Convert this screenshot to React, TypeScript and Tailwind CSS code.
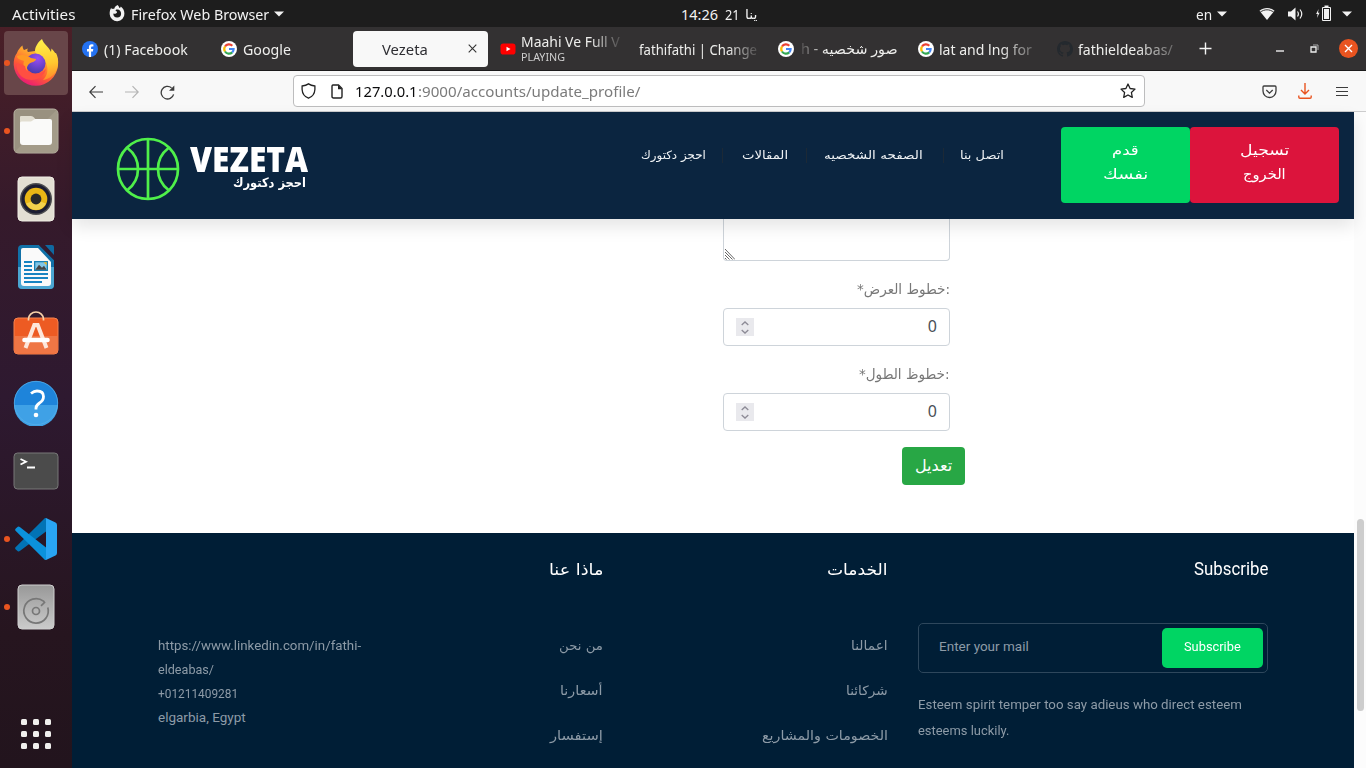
import { useLayoutEffect, useRef, useState, type ReactNode } from "react";

/* One line of text stretched or squeezed to the width of its box. */
function Fit({ className, dir = "ltr", children }: { className: string; dir?: "ltr" | "rtl"; children: ReactNode }) {
  const box = useRef<HTMLSpanElement>(null);
  const inner = useRef<HTMLSpanElement>(null);
  const [scale, setScale] = useState(1);
  useLayoutEffect(() => {
    if (box.current && inner.current) setScale(box.current.clientWidth / inner.current.offsetWidth);
  }, []);
  return (
    <span ref={box} dir="ltr" className={`block shrink-0 whitespace-nowrap text-left ${className}`}>
      <span ref={inner} dir={dir} className="inline-block origin-left" style={{ transform: `scaleX(${scale})` }}>
        {children}
      </span>
    </span>
  );
}

function Triangle({ className }: { className: string }) {
  return (
    <svg className={`shrink-0 ${className}`} width="10" height="6" viewBox="0 0 10 6">
      <path d="M0 .5h10L5 5.5z" fill="#f2f2f2" />
    </svg>
  );
}

function TopBar() {
  return (
    <div className="flex h-[27px] items-center bg-[#1d1d1d] text-[#f2f2f2]">
      <Fit className="ml-[12px] w-[63px] text-[14.5px] leading-[26px]">Activities</Fit>
      <svg className="ml-[34px] shrink-0" width="16" height="17" viewBox="0 0 16 17">
        <path d="M8.5 0c1.2 1 1.6 1.8 1.8 2.9 1-.2 1.4-.8 1.5-1.5 2.3 1.6 3.6 4.2 3.6 7A7.3 7.3 0 0 1 .7 9.2C.5 6.500 1.200 4.300 2.300 2.700l.5 1.600c.8-.5 1.400-.6 2.300-.3C5.500 2 7 .8 8.500 0z" fill="#f2f2f2" />
        <path d="M4.300 8.500c1.400.6 3 .2 3.700-1 .4-.7-.4-1.200-1-1.200-.6-.5-.4-1.200.3-1.700 2.600-.8 4.800 1.200 4.800 3.900a3.900 3.900 0 0 1-7.800 0z" fill="#1d1d1d" />
      </svg>
      <Fit className="ml-[6px] w-[138px] text-[14.5px] leading-[26px]">Firefox Web Browser</Fit>
      <Triangle className="ml-[5px]" />
      <Fit className="ml-[397px] w-[37px] text-[14.5px] leading-[26px]">14:26</Fit>
      <Fit className="ml-[7px] w-[15px] text-[14.5px] leading-[26px]">21</Fit>
      <Fit dir="rtl" className="ml-[5px] w-[13px] text-[13px] leading-[26px]">ينا</Fit>
      <Fit className="ml-[438px] w-[16px] text-[14.5px] leading-[26px]">en</Fit>
      <Triangle className="ml-[5px]" />
      <svg className="ml-[32px] shrink-0" width="16" height="14" viewBox="0 0 16 14">
        <path d="M.5 3.800C5 0 11 0 15.500 3.800L8 13z" fill="#f2f2f2" />
        <path d="M1.200 5.200C5.500 2 10.500 2 14.800 5.200" stroke="#1d1d1d" strokeWidth=".9" fill="none" />
      </svg>
      <svg className="ml-[13px] shrink-0" width="16" height="14" viewBox="0 0 16 14">
        <path d="M0 4.500h3L7.500.5v13L3 9.500H0z" fill="#f2f2f2" />
        <path d="M9.500 4.500q1.800 2.500 0 5M12 2.500q3.500 4.500 0 9" stroke="#f2f2f2" strokeWidth="1.200" fill="none" />
      </svg>
      <svg className="ml-[12px] shrink-0" width="16" height="17" viewBox="0 0 16 17">
        <path d="M2.600 4 .1 9h1.600l-.8 4L3.600 7.800H2z" fill="#f2f2f2" />
        <path d="M6.500 2.500h8v13h-8z" stroke="#f2f2f2" fill="none" />
        <path d="M8.500.5h4v2h-4zM8 4h5v10H8z" fill="#f2f2f2" />
      </svg>
      <Triangle className="ml-[10px]" />
    </div>
  );
}

function FirefoxIcon() {
  return (
    <svg className="-mt-[3px]" width="46" height="48" viewBox="0 0 46 48">
      <defs>
        <linearGradient id="ff-body" x1=".85" y1="0" x2=".25" y2="1">
          <stop offset="0" stopColor="#fff44f" />
          <stop offset=".35" stopColor="#ffa52e" />
          <stop offset=".65" stopColor="#ff5a35" />
          <stop offset="1" stopColor="#e6137d" />
        </linearGradient>
        <linearGradient id="ff-tail" x1=".5" y1="0" x2=".6" y2="1">
          <stop offset="0" stopColor="#fff04a" />
          <stop offset=".6" stopColor="#ffc82f" />
          <stop offset="1" stopColor="#ff8a2a" />
        </linearGradient>
        <radialGradient id="ff-globe" cx=".6" cy=".25" r=".8">
          <stop offset="0" stopColor="#9a4df5" />
          <stop offset="1" stopColor="#433aa8" />
        </radialGradient>
      </defs>
      <path d="M4 15C5 12 7 9.500 9.500 7.500c.1 2 .5 3 1.500 4.500l4-1.500C14 12 14 13 15 14l7-1 14 4 7-2c2 4 2.500 8 2 12a22.200 22.200 0 0 1-44.300 0C.5 22.500 1.500 18 4 15z" fill="url(#ff-body)" />
      <path d="M29 1c1.500 5 7 8 9 13l.5-3.500C43 15 45.500 20 45 27 43.500 36 37 41 30 42c5-5 6-12 2-19-2-4-9-5-10-10 0-4 3-9 7-12z" fill="url(#ff-tail)" />
      <circle cx="22.500" cy="25.500" r="10" fill="url(#ff-globe)" />
      <path d="M4 18c5-2 10-1 14 2l5 1c0 3-5 3-7 5-3 3-2 6-1 8-5-3-5-9-4-11-3-1-7-2-7-5z" fill="#ff9a25" />
      <path d="M12 28c1 9 13 11 21 3-2 9-13 14-22 9-6-3-8-10-7-15 2 1 6 2 8 3z" fill="#ff4f42" />
    </svg>
  );
}

function FilesIcon() {
  return (
    <svg width="46" height="46" viewBox="0 0 46 46">
      <rect x="1" y="1" width="44" height="44" rx="4.500" fill="#999180" stroke="#b9b3a4" />
      <path d="M1.500 44 44 1.500V41q0 3.500-3.500 3.500H5q-3 0-3.500-.5z" fill="#a39b89" />
      <path d="M7 9q0-1 1-1h10q2 0 3 1.500L23 12v10H7z" fill="#e2ded1" />
      <path d="M7 15q0-1.500 1.500-1.500H18l4-2.500h15q2 0 2 2v21q0 3-3 3H10q-3 0-3-3z" fill="#fafaf9" />
    </svg>
  );
}

function MusicIcon() {
  return (
    <svg width="38" height="46" viewBox="0 0 38 46">
      <rect x="1" y="1" width="36" height="44" rx="4" fill="#e3dfd3" stroke="#f0ede5" />
      <circle cx="19" cy="23" r="16" fill="#4c4c4e" />
      <circle cx="19" cy="23" r="14.500" fill="#1c1d31" />
      <circle cx="19" cy="23" r="11.300" fill="#e9b615" />
      <path d="M9 27.500q10-5 20 0-3 6.500-10 6.500T9 27.500z" fill="#f3d14c" />
      <circle cx="19" cy="23" r="5.400" fill="#292929" />
    </svg>
  );
}

function WriterIcon() {
  return (
    <svg width="38" height="46" viewBox="0 0 38 46">
      <path d="M5 1h17l15 15v25q0 4-4 4H5q-4 0-4-4V5q0-4 4-4z" fill="#1171a8" />
      <path d="M1 23h36v18q0 4-4 4H5q-4 0-4-4z" fill="#4ba6d2" />
      <path d="M6 4h15l13 14v21q0 3-3 3H7q-3 0-3-3V6q0-2 2-2z" fill="#fafafa" />
      <path d="M28 1h7q2 0 2 2v8z" fill="#0f69a1" />
      <path d="M22 1h4l11 11v4z" fill="#321c31" />
      <path d="M7 18h8M7 22h8M7 26h8M7 30h24M7 34h24M7 38h18" stroke="#1784c2" strokeWidth="2" />
      <rect x="17" y="17" width="14" height="10" fill="#1781b5" />
      <rect x="18.300" y="18.300" width="11.400" height="7.400" fill="#82c7e8" />
      <path d="m18.300 25.700 3.700-5 3 3 2-2 2.700 4z" fill="#454545" />
      <path d="M26.500 18.300h3.200v3z" fill="#f2b51b" />
    </svg>
  );
}

function SoftwareIcon() {
  return (
    <svg className="-mt-[5px]" width="46" height="46" viewBox="0 0 46 46">
      <rect x="1" y="8" width="44" height="36" rx="4" fill="#ed5b23" stroke="#f5824f" />
      <path d="M1.500 26h43v14q0 3.500-3.500 3.500H5q-3.500 0-3.500-3.500z" fill="#ef7645" />
      <path d="M15.500 10.500V9a7.500 7 0 0 1 15 0v1.500" fill="none" stroke="#f9d2a9" strokeWidth="1.700" />
      <path d="m12.500 38 8.800-23h3.400L33.500 38" fill="none" stroke="#fde7db" strokeWidth="4" />
      <path d="M11.500 30h23" stroke="#fff" strokeWidth="4.600" strokeLinecap="round" />
    </svg>
  );
}

function HelpIcon() {
  return (
    <svg width="46" height="46" viewBox="0 0 46 46">
      <circle cx="23" cy="23" r="22" fill="#1e84da" />
      <path d="M1 25h44a22 22 0 0 1-44 0z" fill="#3fa1e6" />
      <circle cx="23" cy="23" r="21.700" fill="none" stroke="#55aee9" strokeWidth=".8" />
      <path d="M18 13.500q3-2.500 6-2.500 6.500 0 6.500 5.500 0 4-4 6.500-3.500 2.500-3.500 5v1.500" fill="none" stroke="#fff" strokeWidth="2.800" />
      <circle cx="23" cy="35" r="2.300" fill="#fff" />
    </svg>
  );
}

function TerminalIcon() {
  return (
    <svg width="46" height="38" viewBox="0 0 46 38">
      <rect x="1" y="1" width="44" height="36" rx="3.500" fill="#4b4b4b" stroke="#797979" />
      <path d="m7.500 7 5.500 2.700-5.500 2.800M14 15.500h8" fill="none" stroke="#fff" strokeWidth="1.800" />
    </svg>
  );
}

function CodeIcon() {
  return (
    <svg width="42" height="42" viewBox="0 0 42 42">
      <path d="M.3 29.500q-.5 1 .5 2l2 1.700q1 .6 2-.2L31 13.500V0h-1Z" fill="#0273b5" />
      <path d="M.3 12.500q-.5-1 .5-2l2-1.700q1-.6 2 .2L31 29.500V42h-1Z" fill="#0b92dc" />
      <path d="M31 0 40.500 4.500Q42 5.200 42 7v28q0 1.800-1.500 2.500L31 42z" fill="#29a5f3" />
    </svg>
  );
}

function DiskIcon() {
  return (
    <svg width="38" height="46" viewBox="0 0 38 46">
      <defs>
        <linearGradient id="disk" x1="0" y1="0" x2="0" y2="1">
          <stop offset="0" stopColor="#989898" />
          <stop offset="1" stopColor="#cbcbcb" />
        </linearGradient>
      </defs>
      <rect x="1" y="1" width="36" height="44" rx="4" fill="url(#disk)" stroke="#cfcfcf" />
      <path d="M30.800 23.500a12.200 12.200 0 1 1-4.300-6.300l1 1.300-3.500 3.300" fill="none" stroke="#777" strokeWidth="1.700" />
      <circle cx="19" cy="27" r="3.500" fill="none" stroke="#777" strokeWidth="1.700" />
    </svg>
  );
}

function Dock() {
  const apps = [
    { name: "firefox", icon: <FirefoxIcon />, running: true },
    { name: "files", icon: <FilesIcon />, running: true },
    { name: "music", icon: <MusicIcon /> },
    { name: "writer", icon: <WriterIcon /> },
    { name: "software", icon: <SoftwareIcon /> },
    { name: "help", icon: <HelpIcon /> },
    { name: "terminal", icon: <TerminalIcon /> },
    { name: "code", icon: <CodeIcon />, running: true },
    { name: "disk", icon: <DiskIcon />, running: true },
  ];
  return (
    <aside className="flex w-[72px] shrink-0 flex-col bg-[linear-gradient(#4a1f27_0%,#351a2b_25%,#2e1930_50%,#26151f_82%,#22141d_100%)] pt-[2px]">
      {apps.map((app, i) => (
        <div key={app.name} className="flex h-[68px] items-center">
          <i className={`ml-[4px] h-[6px] w-[6px] shrink-0 rounded-full ${app.running ? "relative z-10 bg-[#e95420]" : ""}`} />
          <div className={`-ml-[6px] flex h-[64px] w-[64px] items-center justify-center rounded-[4px] ${i === 0 ? "bg-[#684649]" : ""}`}>
            {app.icon}
          </div>
        </div>
      ))}
      <div className="ml-[21px] mt-[78px] grid w-[30px] grid-cols-3 gap-[6px]">
        {[0, 1, 2, 3, 4, 5, 6, 7, 8].map((n) => (
          <i key={n} className="h-[6px] w-[6px] rounded-[1.500px] bg-[#f0efed]" />
        ))}
      </div>
    </aside>
  );
}

function GoogleIcon() {
  return (
    <svg className="shrink-0" width="16" height="16" viewBox="0 0 16 16">
      <circle cx="8" cy="8" r="8" fill="#fff" />
      <g fill="none" strokeWidth="2.200">
        <path d="M4 5.500A4.700 4.700 0 0 1 11.300 4.700" stroke="#ea4335" />
        <path d="M4 5.500a4.700 4.700 0 0 0 0 5" stroke="#fbbc05" />
        <path d="M4 10.500a4.700 4.700 0 0 0 7.200.9" stroke="#34a853" />
        <path d="M11.200 11.400A4.700 4.700 0 0 0 12.600 8H8" stroke="#4285f4" />
      </g>
    </svg>
  );
}

function TabBar() {
  return (
    <div className="flex h-[44px] items-center border-b border-[#1c1b1c] bg-[#333132] text-[14.5px] leading-[24px] text-[#eeeeec]">
      <div className="flex w-[139px] items-center pl-[10px]">
        <svg width="16" height="16" viewBox="0 0 16 16">
          <circle cx="8" cy="8" r="8" fill="#2472f2" />
          <path d="M6.900 16v-5.600H5V8.100h1.900V6.500c0-2 1.100-3.200 3-3.200l1.500.1v2h-1c-1 0-1.300.5-1.300 1.200v1.500h2.200l-.4 2.300H9.100V16z" fill="#fff" />
        </svg>
        <Fit className="ml-[6px] w-[84px]">(1) Facebook</Fit>
      </div>
      <div className="flex w-[139px] items-center pl-[10px]">
        <GoogleIcon />
        <Fit className="ml-[6px] w-[48px]">Google</Fit>
      </div>
      <div className="mx-[3px] flex h-[36px] w-[135px] items-center rounded-[4px] bg-[#f8f8f8] pl-[29px] text-[#2e2e33]">
        <Fit className="w-[46px]">Vezeta</Fit>
        <svg className="ml-[40px]" width="9" height="9" viewBox="0 0 9 9">
          <path d="m.7.7 7.600 7.600m0-7.600L.7 8.300" stroke="#333" strokeWidth="1.100" />
        </svg>
      </div>
      <div className="flex w-[137px] items-center pl-[9px]">
        <svg className="shrink-0" width="16" height="12" viewBox="0 0 16 12">
          <rect x=".5" y=".5" width="15" height="11" rx="2.800" fill="#f00" />
          <path d="m6.500 3.700 4 2.300-4 2.300z" fill="#fff" />
        </svg>
        <div className="ml-[5px]">
          <Fit className="w-[99px] leading-[17px] [mask-image:linear-gradient(to_right,#000_70%,#0003_97%)]">Maahi Ve Full V</Fit>
          <Fit className="w-[44px] text-[10.500px] leading-[15px] text-[#cfcfcf]">PLAYING</Fit>
        </div>
      </div>
      <div className="flex w-[140px] items-center pl-[11px]">
        <Fit className="w-[118px] [mask-image:linear-gradient(to_right,#000_75%,#0003_98%)]">fathifathi | Change</Fit>
      </div>
      <div className="flex w-[140px] items-center pl-[10px]">
        <GoogleIcon />
        <Fit dir="rtl" className="ml-[7px] w-[97px] text-[14px] [mask-image:linear-gradient(to_left,#000_75%,#0003_98%)]">
          صور شخصيه - h
        </Fit>
      </div>
      <div className="flex w-[139px] items-center pl-[10px]">
        <GoogleIcon />
        <Fit className="ml-[5px] w-[93px] [mask-image:linear-gradient(to_right,#000_65%,#0005_98%)]">lat and lng for</Fit>
      </div>
      <div className="flex w-[139px] items-center pl-[10px]">
        <svg className="shrink-0" width="16" height="16" viewBox="0 0 16 16" fill="#24292e">
          <path d="M8 0C3.580 0 0 3.580 0 8c0 3.540 2.290 6.530 5.470 7.590.4.070.55-.17.55-.38 0-.19-.01-.82-.01-1.490-2.010.37-2.530-.49-2.690-.94-.09-.23-.48-.94-.82-1.130-.28-.15-.68-.52-.01-.53.63-.01 1.080.58 1.230.82.72 1.210 1.870.87 2.330.66.070-.52.28-.87.51-1.070-1.780-.2-3.640-.89-3.640-3.950 0-.87.31-1.590.82-2.150-.08-.2-.36-1.020.08-2.120 0 0 .67-.21 2.200.82.64-.18 1.320-.27 2-.27s1.360.09 2 .27c1.530-1.040 2.200-.82 2.200-.82.44 1.100.16 1.920.08 2.120.51.56.82 1.270.82 2.150 0 3.070-1.870 3.750-3.650 3.950.29.25.54.73.54 1.480 0 1.070-.01 1.930-.01 2.200 0 .21.15.46.55.38A8.010 8.010 0 0 0 16 8c0-4.420-3.580-8-8-8z" />
        </svg>
        <Fit className="ml-[5px] w-[95px] [mask-image:linear-gradient(to_right,#000_60%,#0005_98%)]">fathieldeabas/</Fit>
      </div>
      <svg className="ml-[13px]" width="13" height="13" viewBox="0 0 13 13">
        <path d="M6.500.5v12M.5 6.500h12" stroke="#f4f4f4" strokeWidth="1.400" />
      </svg>
      <svg className="ml-[64px] mt-[5px]" width="8" height="2" viewBox="0 0 8 2">
        <path d="M0 1h8" stroke="#eee" strokeWidth="1.400" />
      </svg>
      <svg className="ml-[26px]" width="9" height="9" viewBox="0 0 9 9">
        <path d="M1 3h5v5H1z" fill="none" stroke="#eee" strokeWidth="1.300" />
        <path d="M3 1h5v5" fill="none" stroke="#aaa" />
      </svg>
      <div className="ml-[20px] flex h-[19px] w-[19px] items-center justify-center rounded-full bg-[#e95420]">
        <svg width="9" height="9" viewBox="0 0 9 9">
          <path d="m1 1 7 7m0-7L1 8" stroke="#fff" strokeWidth="1.400" />
        </svg>
      </div>
    </div>
  );
}

function NavBar() {
  return (
    <div className="flex h-[41px] items-center border-b border-[#cccccd] bg-[#f8f8f8]">
      <svg className="ml-[17px] mt-[2px]" width="14" height="14" viewBox="0 0 14 14" fill="none" stroke="#3c3c3c" strokeWidth="1.200">
        <path d="M14 7H1M6.500 1.200.8 7l5.700 5.800" />
      </svg>
      <svg className="ml-[22px] mt-[2px]" width="14" height="14" viewBox="0 0 14 14" fill="none" stroke="#b4b4b4" strokeWidth="1.200">
        <path d="M0 7h13M7.500 1.200 13.200 7l-5.700 5.800" />
      </svg>
      <svg className="ml-[21px] mt-[2px]" width="15" height="15" viewBox="0 0 15 15">
        <path d="M13.600 9.300A6.300 6.300 0 1 1 11.500 2.800" fill="none" stroke="#3c3c3c" strokeWidth="1.300" />
        <path d="M14.300.5v5.200H9z" fill="#3c3c3c" />
      </svg>
      <div className="ml-[118px] flex h-[32px] w-[852px] items-center rounded-[4px] border border-[#bdbdbe] bg-white text-[15px] leading-[28px]">
        <svg className="ml-[7px]" width="15" height="16" viewBox="0 0 15 16" fill="none" stroke="#222" strokeWidth="1.300">
          <path d="M7.500.9Q10 2.700 13.900 3v3.500Q13.500 13 7.500 15.200 1.500 13 1.100 6.500V3Q5 2.700 7.500.9z" />
        </svg>
        <svg className="ml-[15px]" width="12" height="15" viewBox="0 0 12 15">
          <path d="M2 1h5.500L11 4.500v8q0 1.500-1.500 1.500h-7Q1 14 1 12.500v-10Q1 1 2 1z" fill="none" stroke="#222" strokeWidth="1.400" />
          <path d="M7 1v4.300h4z" fill="#222" />
        </svg>
        <Fit className="ml-[12px] w-[63px] text-[#0c0c0d]">127.0.0.1</Fit>
        <Fit className="w-[222px] text-[#7b7b7b]">:9000/accounts/update_profile/</Fit>
        <svg className="ml-[480px]" width="16" height="16" viewBox="0 0 16 16">
          <path d="m8 1 2.100 4.500 4.900.6-3.600 3.400.9 4.900L8 12l-4.300 2.400.9-4.900L1 6.100l4.900-.6z" fill="none" stroke="#222" strokeWidth="1.300" strokeLinejoin="round" />
        </svg>
      </div>
      <svg className="ml-[117px] mt-[2px]" width="15" height="14" viewBox="0 0 15 14" fill="none" stroke="#3c3c3c" strokeWidth="1.300">
        <path d="M2 1h11q1 0 1 1v4a6.500 6.500 0 0 1-13 0V2q0-1 1-1zM4.300 5l3.200 3.200L10.700 5" />
      </svg>
      <svg className="ml-[21px]" width="14" height="16" viewBox="0 0 14 16" fill="none" stroke="#e95420" strokeWidth="1.400">
        <path d="M7 0v10.500M3 7l4 4 4-4M.8 12.500V14q0 1.200 1.200 1.200h10q1.200 0 1.200-1.200v-1.500" />
      </svg>
      <svg className="ml-[24px]" width="12" height="11" viewBox="0 0 12 11">
        <path d="M0 1.500h12M0 5.500h12M0 9.500h12" stroke="#3c3c3c" strokeWidth="1.200" />
      </svg>
    </div>
  );
}

const arabic = "font-['DejaVu_Sans',sans-serif]";

function SiteHeader() {
  return (
    <header className="relative z-10 flex h-[107px] bg-[#0b2540] shadow-[0_8px_16px_rgba(0,0,0,0.1)]">
      <svg className="ml-[44px] mt-[25px] shrink-0" width="64" height="64" viewBox="0 0 64 64" fill="none" stroke="#4ff04a" strokeWidth="2.700">
        <circle cx="32" cy="32" r="30" />
        <path d="M32 2v60M2 32h60M11.500 11q10.500 8 10.500 21T11.500 53M52.500 11Q42 19 42 32t10.500 21" />
      </svg>
      <div className="ml-[10px] mt-[32px] w-[120px] text-white">
        <Fit className="h-[30px] w-[118px] font-['Open_Sans',sans-serif] text-[35px] leading-[30px] font-extrabold">VEZETA</Fit>
        <Fit dir="rtl" className={`ml-[43px] mt-px w-[73px] text-[13px] leading-[15px] font-bold ${arabic}`}>احجز دكتورك</Fit>
      </div>
      <nav className={`ml-[331px] mt-[33px] flex h-[20px] items-center text-[11.500px] leading-[20px] text-[#f0f3f5] ${arabic}`}>
        <Fit dir="rtl" className="w-[65px]">احجز دكتورك</Fit>
        <i className="ml-[16px] h-[15px] w-px bg-[#1c2936]" />
        <Fit dir="rtl" className="ml-[19px] w-[46px]">المقالات</Fit>
        <i className="ml-[18px] h-[15px] w-px bg-[#1c2936]" />
        <Fit dir="rtl" className="ml-[17px] w-[99px]">الصفحه الشخصيه</Fit>
        <i className="ml-[20px] h-[15px] w-px bg-[#1c2936]" />
        <Fit dir="rtl" className="ml-[16px] w-[44px]">اتصل بنا</Fit>
      </nav>
      <div className={`ml-[57px] mt-[15px] flex h-[76px] text-[14px] leading-[24px] text-white ${arabic}`}>
        <button className="flex w-[129px] flex-col items-center rounded-[4px] bg-[#00d563] pt-[11px]">
          <Fit dir="rtl" className="w-[27px]">قدم</Fit>
          <Fit dir="rtl" className="w-[45px]">نفسك</Fit>
        </button>
        <button className="flex w-[149px] flex-col items-center rounded-[4px] bg-[#dc143c] pt-[11px]">
          <Fit dir="rtl" className="w-[49px]">تسجيل</Fit>
          <Fit dir="rtl" className="w-[43px]">الخروج</Fit>
        </button>
      </div>
    </header>
  );
}

function NumberField({ label, labelWidth }: { label: string; labelWidth: string }) {
  return (
    <div className="h-[85px]">
      <div className="flex h-[31px] justify-end pt-[1px]">
        <Fit className={`text-[14px] leading-[22px] text-[#777] ${arabic} ${labelWidth}`}>{label}</Fit>
      </div>
      <div className="flex h-[38px] items-center justify-between rounded-[4px] border border-[#ced4da] px-[12px]">
        <span className="flex h-[18px] w-[18px] items-center justify-center bg-[#e9e9ed]">
          <svg width="8" height="13" viewBox="0 0 8 13" fill="none" stroke="#8d8b96" strokeWidth="1.300">
            <path d="m.7 4 3.300-3 3.300 3M.7 9 4 12l3.300-3" />
          </svg>
        </span>
        <span className="-mt-[2px] text-[16px] leading-[24px] text-[#495057]">0</span>
      </div>
    </div>
  );
}

function ProfileForm() {
  return (
    <main className="h-[314px] bg-white pl-[651px]">
      <div className="w-[227px]">
        <div className="flex h-[42px] items-end rounded-b-[4px] border border-t-0 border-[#ced4da]">
          <svg width="11" height="11" viewBox="0 0 11 11">
            <path d="M1 0l10 10.500M1 3l7.500 7.500M1 6l4.500 4.500M1 9l1.500 1.500" stroke="#666" />
          </svg>
        </div>
        <div className="pt-[16px]">
          <NumberField label="*خطوط العرض:" labelWidth="w-[93px]" />
          <NumberField label="*خطوظ الطول:" labelWidth="w-[91px]" />
        </div>
        <button className={`ml-[179px] flex h-[38px] w-[63px] items-center justify-center rounded-[4px] bg-[#28a745] text-[16px] leading-[24px] text-white ${arabic}`}>
          <Fit dir="rtl" className="w-[37px]">تعديل</Fit>
        </button>
      </div>
    </main>
  );
}

function LinkColumn({ className, title, titleWidth, links }: { className: string; title: string; titleWidth: string; links: { text: string; width: string }[] }) {
  return (
    <div className={`flex shrink-0 flex-col items-end pt-[22px] ${arabic} ${className}`}>
      <Fit dir="rtl" className={`text-[16px] leading-[30px] text-white ${titleWidth}`}>{title}</Fit>
      <div className="mt-[49px] flex flex-col items-end gap-[21px] text-[13px] leading-[24px] text-[#8d9ba7]">
        {links.map((link) => (
          <Fit key={link.text} dir="rtl" className={link.width}>{link.text}</Fit>
        ))}
      </div>
    </div>
  );
}

function SiteFooter() {
  return (
    <footer className="flex h-[235px] overflow-hidden bg-[#001e36] pl-[86px] font-['Roboto','DejaVu_Sans',sans-serif] text-[13.500px] leading-[24px] text-[#8d9ba7]">
      <address className="w-[240px] shrink-0 pt-[100px] not-italic">
        <Fit className="w-[203px]">https://www.linkedin.com/in/fathi-</Fit>
        <Fit className="w-[56px]">eldeabas/</Fit>
        <Fit className="w-[80px]">+01211409281</Fit>
        <Fit className="w-[88px]">elgarbia, Egypt</Fit>
      </address>
      <LinkColumn
        className="w-[205px]"
        title="ماذا عنا"
        titleWidth="w-[54px]"
        links={[
          { text: "من نحن", width: "w-[44px]" },
          { text: "أسعارنا", width: "w-[43px]" },
          { text: "إستفسار", width: "w-[53px]" },
        ]}
      />
      <LinkColumn
        className="w-[285px]"
        title="الخدمات"
        titleWidth="w-[61px]"
        links={[
          { text: "اعمالنا", width: "w-[37px]" },
          { text: "شركائنا", width: "w-[42px]" },
          { text: "الخصومات والمشاريع", width: "w-[126px]" },
        ]}
      />
      <div className="ml-[30px] w-[350px] shrink-0">
        <div className="flex justify-end pt-[21px]">
          <Fit className="w-[74px] text-[17.500px] leading-[30px] text-white">Subscribe</Fit>
        </div>
        <div className="mt-[39px] flex h-[50px] items-center justify-between rounded-[5px] border border-[#2e475c] pr-[4px] pl-[20px]">
          <Fit className="mb-[4px] w-[90px]">Enter your mail</Fit>
          <button className="flex h-[40px] w-[101px] justify-center rounded-[5px] bg-[#00d563] pt-[6px] text-white">
            <Fit className="w-[57px]">Subscribe</Fit>
          </button>
        </div>
        <p className="pt-[18px] leading-[26px]">
          <Fit className="w-[324px]">Esteem spirit temper too say adieus who direct esteem</Fit>
          <Fit className="w-[91px]">esteems luckily.</Fit>
        </p>
      </div>
    </footer>
  );
}

export default function App() {
  return (
    <div className="flex h-[768px] w-[1366px] flex-col overflow-hidden bg-white font-['Noto_Sans','DejaVu_Sans',sans-serif]">
      <TopBar />
      <div className="flex h-[741px]">
        <Dock />
        <div className="flex w-[1294px] flex-col">
          <TabBar />
          <NavBar />
          <div className="flex h-[656px]">
            <div className="w-[1282px]">
              <SiteHeader />
              <ProfileForm />
              <SiteFooter />
            </div>
            <div className="w-[12px] bg-[#fcfcfc] pt-[407px] pl-[3px]">
              <div className="h-[192px] w-[7px] rounded-full bg-[#cdcdcd]" />
            </div>
          </div>
        </div>
      </div>
    </div>
  );
}
